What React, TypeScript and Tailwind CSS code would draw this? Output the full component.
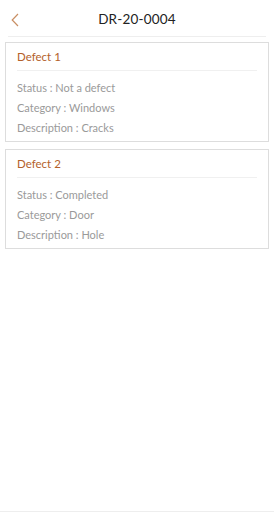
import React from "react";

const defects = [
  {
    title: "Defect 1",
    rows: ["Status : Not a defect", "Category : Windows", "Description : Cracks"],
  },
  {
    title: "Defect 2",
    rows: ["Status : Completed", "Category : Door", "Description : Hole"],
  },
];

export default function App() {
  return (
    <div
      className="w-[274px] h-[512px] bg-white flex flex-col"
      style={{ fontFamily: "Lato, 'Open Sans', sans-serif" }}
    >
      {/* header */}
      <div className="relative h-[37px] mx-[8px] border-b border-[#eeeeee] flex items-center justify-center">
        <svg
          className="absolute left-[3px] top-[13px]"
          width="8"
          height="14"
          viewBox="0 0 8 14"
          fill="none"
        >
          <path d="M7 1 L1.2 7 L7 13" stroke="#c98f64" strokeWidth="1.2" />
        </svg>
        <h1 className="text-[13.5px] text-[#222] tracking-[0.2px] mt-[2px]">DR-20-0004</h1>
      </div>

      {/* defects */}
      <div className="flex flex-col gap-[7px] mt-[5px] px-[5px]">
        {defects.map((d) => (
          <div key={d.title} className="border border-[#dddddd] h-[100px] px-[11px]">
            <div className="h-[28px] border-b border-[#f0f0f0] flex items-center text-[11.5px] text-[#b4612a]">
              {d.title}
            </div>
            <div className="flex flex-col pt-[7px]">
              {d.rows.map((r) => (
                <p key={r} className="h-[20px] leading-[20px] text-[11px] text-[#9a9a9a]">
                  {r}
                </p>
              ))}
            </div>
          </div>
        ))}
      </div>

      <div className="flex-1" />
      <div className="h-[1px] bg-[#eeeeee]" />
    </div>
  );
}
